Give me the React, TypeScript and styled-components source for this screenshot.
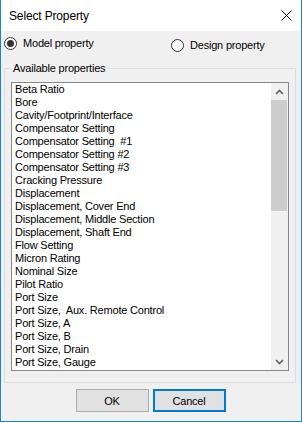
import * as React from "react";
import styled, { createGlobalStyle } from "styled-components";

const GlobalStyle = createGlobalStyle`
  html, body {
    margin: 0;
    padding: 0;
    background: #fff;
  }
  body {
    font-family: "Liberation Sans", Arial, sans-serif;
    font-size: 11px;
    letter-spacing: -0.2px;
    color: #000;
  }
`;

const properties = [
  "Beta Ratio",
  "Bore",
  "Cavity/Footprint/Interface",
  "Compensator Setting",
  "Compensator Setting  #1",
  "Compensator Setting #2",
  "Compensator Setting #3",
  "Cracking Pressure",
  "Displacement",
  "Displacement, Cover End",
  "Displacement, Middle Section",
  "Displacement, Shaft End",
  "Flow Setting",
  "Micron Rating",
  "Nominal Size",
  "Pilot Ratio",
  "Port Size",
  "Port Size,  Aux. Remote Control",
  "Port Size, A",
  "Port Size, B",
  "Port Size, Drain",
  "Port Size, Gauge"
];

const Window = styled.div`
  width: 302px;
  height: 422px;
  box-sizing: border-box;
  border: 1px solid #1883d7;
  border-top: none;
  background: #f0f0f0;
  display: flex;
  flex-direction: column;
`;

const TitleBar = styled.div`
  height: 31px;
  background: #fff;
  display: flex;
  align-items: center;
  justify-content: space-between;
  padding: 0 9px 0 8px;
  flex-shrink: 0;
`;

const Title = styled.span`
  font-size: 12px;
  line-height: 16px;
  letter-spacing: -0.15px;
  padding-top: 1px;
`;

const CloseIcon = () => (
  <svg width="11" height="11" viewBox="0 0 11 11">
    <path d="M0.5 0.5 L10.5 10.5 M10.5 0.5 L0.5 10.5" stroke="#000" strokeWidth="1" />
  </svg>
);

const RadioRow = styled.div`
  height: 31px;
  display: flex;
  align-items: flex-start;
  padding: 6px 0 0 3px;
  box-sizing: border-box;
  flex-shrink: 0;
`;

const RadioOption = styled.label<{ $drop: number; $width: number }>`
  display: flex;
  align-items: center;
  gap: 6px;
  width: ${p => p.$width}px;
  margin-top: ${p => p.$drop}px;
  line-height: 13px;
`;

const RadioCircle = styled.span<{ $checked: boolean }>`
  width: 13px;
  height: 13px;
  box-sizing: border-box;
  border-radius: 50%;
  border: 1px solid #333;
  background: #fff;
  display: flex;
  align-items: center;
  justify-content: center;

  &::after {
    content: "";
    width: 7px;
    height: 7px;
    border-radius: 50%;
    background: ${p => (p.$checked ? "#333" : "transparent")};
  }
`;

const GroupBox = styled.fieldset`
  margin: 0 5px 0 3px;
  padding: 7px 6px 11px 6px;
  border: 1px solid #dcdcdc;
  flex-shrink: 0;
`;

const GroupLegend = styled.legend`
  padding: 0 2px;
  line-height: 13px;
  font-size: 11px;
`;

const ListBox = styled.div`
  height: 289px;
  box-sizing: border-box;
  border: 1px solid #828790;
  background: #fff;
  display: flex;
`;

const ItemList = styled.ul`
  flex: 1;
  list-style: none;
  margin: 0;
  padding: 0 0 0 3px;
  overflow: hidden;
`;

const Item = styled.li`
  line-height: 13px;
  height: 13px;
  white-space: pre;
`;

const ScrollBar = styled.div`
  width: 17px;
  background: #f0f0f0;
  display: flex;
  flex-direction: column;
`;

const ArrowButton = styled.div`
  height: 17px;
  display: flex;
  align-items: center;
  justify-content: center;
  flex-shrink: 0;
`;

const Track = styled.div`
  flex: 1;
  display: flex;
  flex-direction: column;
`;

const Thumb = styled.div`
  height: 111px;
  margin-right: 1px;
  background: #cdcdcd;
`;

const Chevron = ({ up }: { up: boolean }) => (
  <svg width="9" height="6" viewBox="0 0 9 6">
    <path
      d={up ? "M1 5 L4.5 1.5 L8 5" : "M1 1 L4.5 4.5 L8 1"}
      fill="none"
      stroke="#606060"
      strokeWidth="1.6"
    />
  </svg>
);

const ButtonRow = styled.div`
  display: flex;
  justify-content: center;
  gap: 4px;
  margin-top: 6px;
  padding-right: 1px;
`;

const Button = styled.button<{ $focused?: boolean }>`
  width: 73px;
  height: 23px;
  box-sizing: border-box;
  margin: 0;
  padding: 0;
  background: #e1e1e1;
  border: ${p => (p.$focused ? "2px solid #0078d7" : "1px solid #adadad")};
  font-family: "Liberation Sans", Arial, sans-serif;
  font-size: 11px;
  letter-spacing: -0.2px;
  color: #000;
`;

export default function App() {
  return (
    <>
      <GlobalStyle />
      <Window>
        <TitleBar>
          <Title>Select Property</Title>
          <CloseIcon />
        </TitleBar>
        <RadioRow>
          <RadioOption $drop={0} $width={167}>
            <RadioCircle $checked={true} />
            Model property
          </RadioOption>
          <RadioOption $drop={2} $width={120}>
            <RadioCircle $checked={false} />
            Design property
          </RadioOption>
        </RadioRow>
        <GroupBox>
          <GroupLegend>Available properties</GroupLegend>
          <ListBox>
            <ItemList>
              {properties.map(p => (
                <Item key={p}>{p}</Item>
              ))}
            </ItemList>
            <ScrollBar>
              <ArrowButton>
                <Chevron up={true} />
              </ArrowButton>
              <Track>
                <Thumb />
              </Track>
              <ArrowButton>
                <Chevron up={false} />
              </ArrowButton>
            </ScrollBar>
          </ListBox>
        </GroupBox>
        <ButtonRow>
          <Button>OK</Button>
          <Button $focused={true}>Cancel</Button>
        </ButtonRow>
      </Window>
    </>
  );
}
